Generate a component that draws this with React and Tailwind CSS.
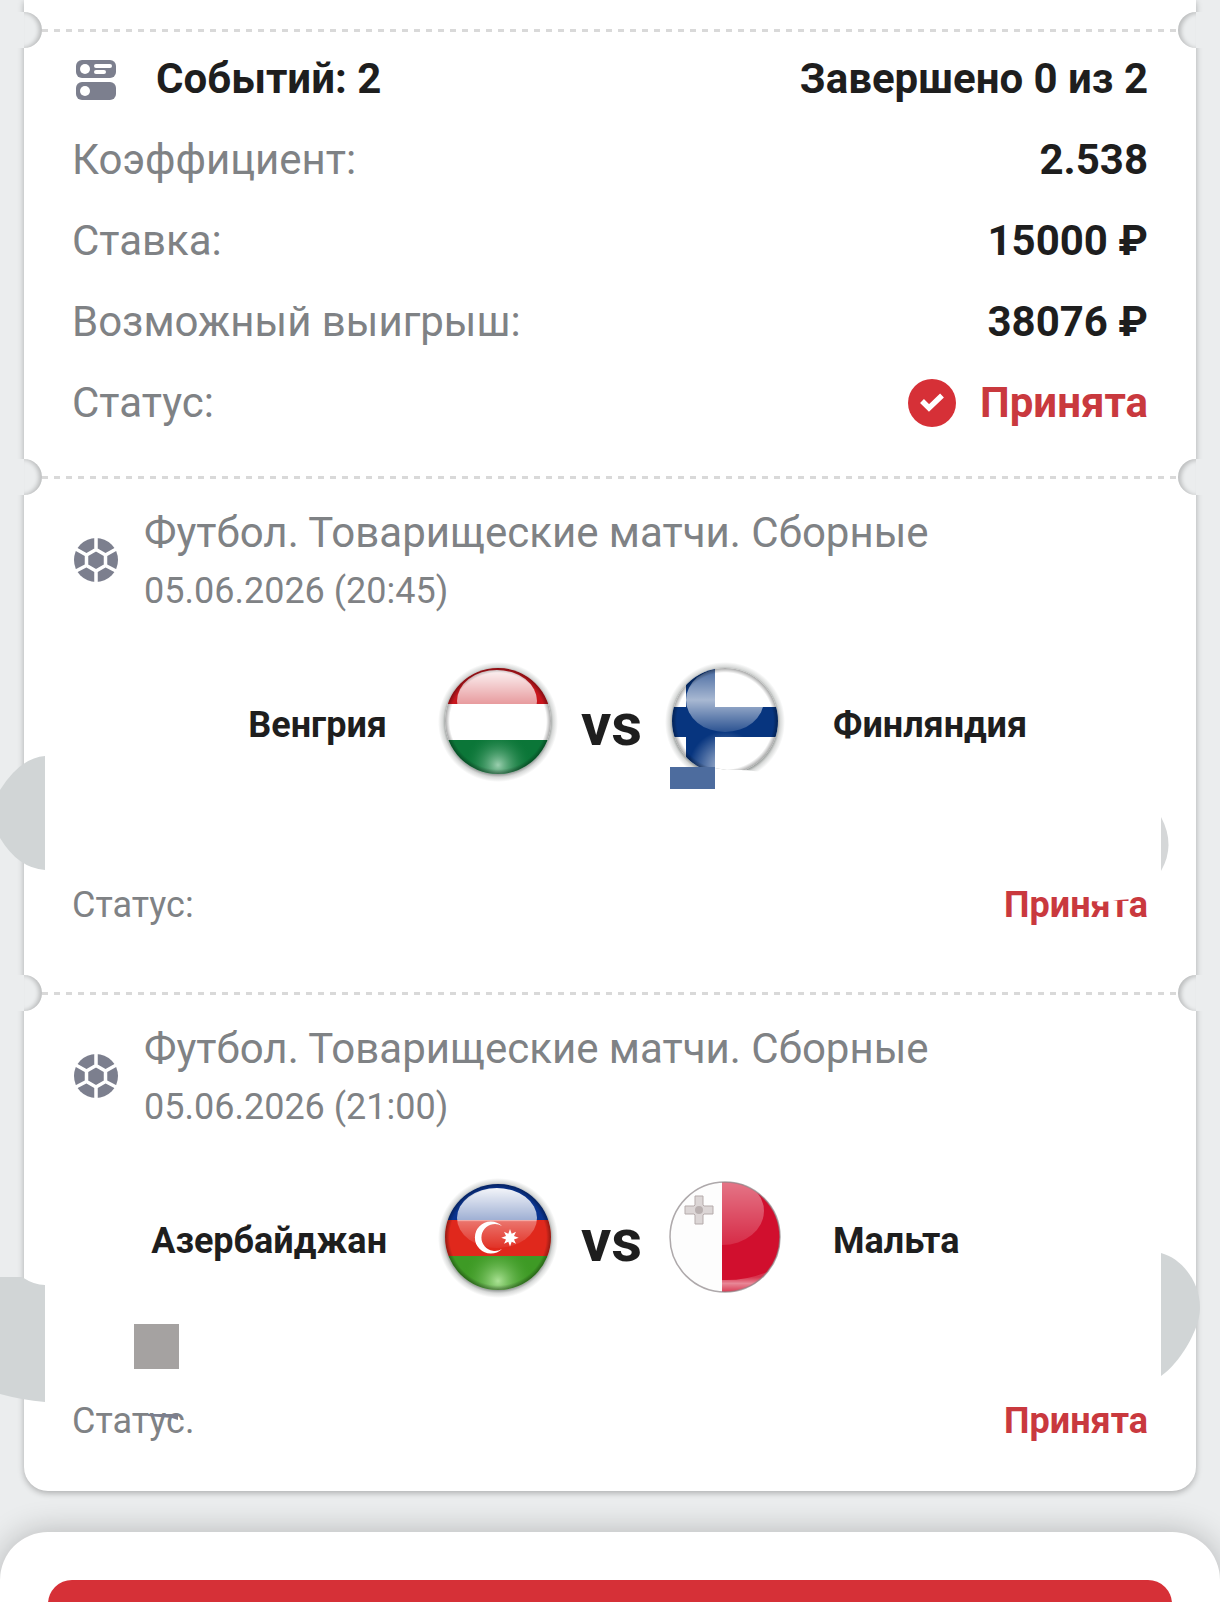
import React from 'react';

const HungaryFlag = () => (
  <svg viewBox="0 0 112 120" className="w-28 h-[120px] overflow-visible" role="img" aria-label="Венгрия">
    <defs>
      <clipPath id="hu-clip"><circle cx="56" cy="56" r="53" /></clipPath>
      <linearGradient id="hu-gloss" x1="0" y1="0" x2="0" y2="1">
        <stop offset="0" stopColor="#fff" stopOpacity="0.95" />
        <stop offset="0.58" stopColor="#fff" stopOpacity="0.55" />
        <stop offset="1" stopColor="#fff" stopOpacity="0" />
      </linearGradient>
      <radialGradient id="hu-glow" gradientUnits="userSpaceOnUse" cx="56" cy="100" r="34">
        <stop offset="0" stopColor="#b4dfc4" stopOpacity="0.85" />
        <stop offset="1" stopColor="#0f7a3a" stopOpacity="0" />
      </radialGradient>
      <radialGradient id="halo">
        <stop offset="0.86" stopColor="#4c5450" stopOpacity="0.65" />
        <stop offset="0.92" stopColor="#4c5450" stopOpacity="0.22" />
        <stop offset="1" stopColor="#4c5450" stopOpacity="0" />
      </radialGradient>
      <radialGradient id="rim">
        <stop offset="0.91" stopColor="#000" stopOpacity="0" />
        <stop offset="1" stopColor="#000" stopOpacity="0.35" />
      </radialGradient>
    </defs>
    <circle cx="56" cy="57" r="60" fill="url(#halo)" />
    <g clipPath="url(#hu-clip)">
      <rect width="112" height="39" fill="#c8161d" />
      <rect y="39" width="112" height="36" fill="#fff" />
      <rect y="75" width="112" height="40" fill="#0b7638" />
      <rect y="75" width="112" height="40" fill="url(#hu-glow)" />
      <ellipse cx="55" cy="36" rx="40" ry="31" fill="url(#hu-gloss)" />
      <circle cx="56" cy="56" r="53" fill="url(#rim)" />
    </g>
  </svg>
);

const FinlandFlag = () => (
  <svg viewBox="0 0 112 120" className="w-28 h-[120px] overflow-visible" role="img" aria-label="Финляндия">
    <defs>
      <clipPath id="fi-clip"><circle cx="56" cy="56" r="53" /></clipPath>
      <clipPath id="fi-cut"><path d="M-8-8H120V107L92 107Q74 104 58 105L46 103H-8Z" /></clipPath>
      <linearGradient id="fi-gloss" x1="0" y1="0" x2="0" y2="1">
        <stop offset="0" stopColor="#fff" stopOpacity="0.25" />
        <stop offset="0.5" stopColor="#fff" stopOpacity="0.65" />
        <stop offset="1" stopColor="#fff" stopOpacity="0.15" />
      </linearGradient>
      <radialGradient id="fi-glow" gradientUnits="userSpaceOnUse" cx="56" cy="102" r="36">
        <stop offset="0" stopColor="#fff" stopOpacity="0.7" />
        <stop offset="1" stopColor="#fff" stopOpacity="0" />
      </radialGradient>
    </defs>
    <g clipPath="url(#fi-cut)">
      <circle cx="56" cy="57" r="60" fill="url(#halo)" />
      <g clipPath="url(#fi-clip)">
        <rect width="112" height="112" fill="#fff" />
        <rect x="17" width="29" height="112" fill="#07357f" />
        <rect y="42" width="112" height="30" fill="#07357f" />
        <ellipse cx="56" cy="35" rx="39" ry="32" fill="url(#fi-gloss)" />
        <rect width="112" height="112" fill="url(#fi-glow)" />
        <circle cx="56" cy="56" r="53" fill="url(#rim)" />
      </g>
    </g>
    <rect x="1" y="102" width="45" height="22" fill="#4d6c9e" />
  </svg>
);

const AzerbaijanFlag = () => (
  <svg viewBox="0 0 112 120" className="w-28 h-[120px] overflow-visible" role="img" aria-label="Азербайджан">
    <defs>
      <clipPath id="az-clip"><circle cx="56" cy="56" r="53" /></clipPath>
      <linearGradient id="az-gloss" x1="0" y1="0" x2="0" y2="1">
        <stop offset="0" stopColor="#fff" stopOpacity="0.95" />
        <stop offset="0.55" stopColor="#fff" stopOpacity="0.6" />
        <stop offset="0.56" stopColor="#fff" stopOpacity="0.35" />
        <stop offset="1" stopColor="#fff" stopOpacity="0.05" />
      </linearGradient>
      <radialGradient id="az-glow" gradientUnits="userSpaceOnUse" cx="56" cy="100" r="36">
        <stop offset="0" stopColor="#b8eba2" stopOpacity="0.9" />
        <stop offset="1" stopColor="#3e9a25" stopOpacity="0" />
      </radialGradient>
    </defs>
    <circle cx="56" cy="57" r="60" fill="url(#halo)" />
    <g clipPath="url(#az-clip)">
      <rect width="112" height="39" fill="#0a3490" />
      <rect y="39" width="112" height="36" fill="#e0281c" />
      <rect y="75" width="112" height="40" fill="#3e9a25" />
      <rect y="75" width="112" height="40" fill="url(#az-glow)" />
      <ellipse cx="55" cy="37" rx="40" ry="30" fill="url(#az-gloss)" />
      <path d="M60 45A16 16 0 1 0 60 68A13.500 13.500 0 1 1 60 45Z" fill="#fff" />
      <path d="M68 48l1.700 4.700 4.300-2-2 4.300 4.700 1.700-4.700 1.700 2 4.300-4.300-2-1.700 4.700-1.700-4.700-4.300 2 2-4.300-4.700-1.700 4.700-1.700-2-4.300 4.300 2z" fill="#fff" />
      <circle cx="56" cy="56" r="53" fill="url(#rim)" />
    </g>
  </svg>
);

const MaltaFlag = () => (
  <svg viewBox="0 0 112 120" className="w-28 h-[120px] overflow-visible" role="img" aria-label="Мальта">
    <defs>
      <clipPath id="mt-clip"><circle cx="56" cy="56" r="55" /></clipPath>
      <clipPath id="mt-right"><rect x="53" width="60" height="120" /></clipPath>
      <linearGradient id="mt-gloss" x1="0" y1="0" x2="0" y2="1">
        <stop offset="0" stopColor="#fff" stopOpacity="0.45" />
        <stop offset="1" stopColor="#fff" stopOpacity="0.12" />
      </linearGradient>
      <linearGradient id="mt-base" gradientUnits="userSpaceOnUse" x1="0" y1="96" x2="0" y2="112">
        <stop offset="0" stopColor="#fff" stopOpacity="0.15" />
        <stop offset="0.4" stopColor="#fff" stopOpacity="0.5" />
        <stop offset="1" stopColor="#fff" stopOpacity="0.15" />
      </linearGradient>
    </defs>
    <g clipPath="url(#mt-clip)">
      <rect width="112" height="114" fill="#fdfdfd" />
      <rect x="53" width="60" height="114" fill="#d10f2e" />
      <g clipPath="url(#mt-right)">
        <ellipse cx="53" cy="30" rx="42" ry="34" fill="url(#mt-gloss)" />
        <path d="M53 99Q76 100 98 91L90 112H53Z" fill="url(#mt-base)" />
      </g>
      <path d="M26 15h8v9l1 1h9v8h-9l-1 1v9h-8v-9l-1-1h-9v-8h9l1-1z" fill="#dcd6d6" stroke="#b5abab" strokeWidth="1" />
      <circle cx="30" cy="29" r="4" fill="#b9b0b0" />
    </g>
    <circle cx="56" cy="56" r="55" fill="none" stroke="#8c8488" strokeOpacity="0.7" strokeWidth="1.500" />
  </svg>
);

const EventsIcon = () => (
  <svg viewBox="0 0 48 48" className="size-12" aria-hidden="true">
    <rect x="4" y="5" width="40" height="18" rx="6" fill="#7c7f8e" />
    <rect x="4" y="27" width="40" height="18" rx="6" fill="#7c7f8e" />
    <circle cx="13" cy="14" r="5" fill="#fff" />
    <circle cx="13" cy="36" r="5" fill="#fff" />
    <path d="M24 11h14M24 17h8" stroke="#fff" strokeWidth="4" strokeLinecap="round" />
  </svg>
);

const BallIcon = () => (
  <svg viewBox="0 0 48 48" className="size-12 shrink-0" aria-hidden="true">
    <circle cx="24" cy="24" r="22" fill="#7c7f8e" />
    <path
      d="M24 13.500L33.500 19V29.500L24 35L14.500 29.500V19ZM24 0V13.500M24 35V48M33.500 19L46 12M33.500 29.500L46 36M14.500 19L2 12M14.500 29.500L2 36"
      fill="none"
      stroke="#fff"
      strokeWidth="3.500"
    />
  </svg>
);

const CheckIcon = () => (
  <svg viewBox="0 0 48 48" className="size-12" aria-hidden="true">
    <circle cx="24" cy="24" r="24" fill="#d63037" />
    <path d="M14 22L21 29L34 16.500" fill="none" stroke="#fff" strokeWidth="5.500" />
  </svg>
);

// Ticket tear line: each notch hides the card's edge shadow, only its inner half is shaded
const Perforation = () => (
  <div className="relative h-9 flex items-center px-[18px]">
    <div className="absolute -left-2 top-0 w-2 h-9 bg-[#ebedee]" />
    <div className="absolute left-0 top-0 w-[18px] h-9 rounded-r-full bg-[#ebedee] shadow-[inset_-3px_0_4px_rgba(0,0,0,0.2)]" />
    <div className="h-[3px] flex-1 bg-[repeating-linear-gradient(90deg,#d9d9d9_0_6px,transparent_6px_12px)]" />
    <div className="absolute right-0 top-0 w-[18px] h-9 rounded-l-full bg-[#ebedee] shadow-[inset_3px_1px_4px_rgba(0,0,0,0.2)]" />
    <div className="absolute -right-2 top-0 w-2 h-9 bg-[#ebedee]" />
  </div>
);

const SummaryRow = ({ label, children }) => (
  <div className="flex justify-between items-center h-[49px]">
    <dt className="text-[#7f8285]">{label}</dt>
    <dd className="flex items-center gap-6 font-bold">{children}</dd>
  </div>
);

const EventSection = ({ date, home, away, homeFlag, awayFlag, status, value, children }) => (
  <section className="relative px-12 pt-[13px] pb-[49px]">
    {children}
    <div className="flex items-center gap-6 text-[#7f8285]">
      <BallIcon />
      <div>
        <h2 className="text-[42px] leading-[49px]">Футбол. Товарищеские матчи. Сборные</h2>
        <p className="mt-[13px] text-4xl leading-[42px]">{date}</p>
      </div>
    </div>
    <div className="mt-[53px] grid grid-cols-[1fr_342px_1fr] gap-[52px] items-center text-4xl leading-[42px] font-bold">
      <span className="text-right">{home}</span>
      <div className="flex justify-between items-center pl-[3px]">
        {homeFlag}
        <span className="text-[60px] leading-[70px]">vs</span>
        {awayFlag}
      </div>
      <span>{away}</span>
    </div>
    <div className="mt-[99px] flex justify-between text-4xl leading-[42px]">
      <span className="relative text-[#7f8285]">{status}</span>
      <span className="relative font-bold text-[#c9393e]">{value}</span>
    </div>
  </section>
);

export default function App() {
  return (
    <div className="h-screen overflow-hidden bg-[#ebedee] font-['Roboto',sans-serif] text-[#1e1e1e]">
      <main className="mx-6 pt-3 bg-white rounded-b-3xl shadow-[0_2px_6px_rgba(0,0,0,0.28)]">
        <Perforation />
        <dl className="px-12 pt-1.5 pb-8 flex flex-col gap-8 text-[42px] leading-[49px]">
          <div className="flex justify-between items-center h-[49px] font-bold">
            <dt className="flex items-center gap-9">
              <EventsIcon />
              Событий: 2
            </dt>
            <dd>Завершено 0 из 2</dd>
          </div>
          <SummaryRow label="Коэффициент:">2.538</SummaryRow>
          <SummaryRow label="Ставка:">15000 ₽</SummaryRow>
          <SummaryRow label="Возможный выигрыш:">38076 ₽</SummaryRow>
          <SummaryRow label="Статус:">
            <CheckIcon />
            <span className="text-[#c9393e]">Принята</span>
          </SummaryRow>
        </dl>

        <Perforation />
        <EventSection
          date="05.06.2026 (20:45)"
          home="Венгрия"
          away="Финляндия"
          homeFlag={<HungaryFlag />}
          awayFlag={<FinlandFlag />}
          status="Статус:"
          value={
            <>
              Принята
              <svg viewBox="0 0 141 42" className="absolute right-0 top-0 w-[141px] h-[42px]" aria-hidden="true">
                <path d="M84 10H125V15L112 16Q100 19 84 17Z" fill="#fff" />
              </svg>
            </>
          }
        >
          <svg viewBox="0 0 45 114" className="absolute -left-6 top-[261px] w-[45px] h-[114px]" aria-hidden="true">
            <path d="M45 0Q20 2 0 34V82Q18 112 45 114Z" fill="#d1d5d6" />
          </svg>
          <svg viewBox="0 0 59 54" className="absolute -right-6 top-[322px] w-[59px] h-[54px]" aria-hidden="true">
            <path d="M0 0Q15 28 0 54Z" fill="#d5d7d8" />
          </svg>
        </EventSection>

        <Perforation />
        <EventSection
          date="05.06.2026 (21:00)"
          home="Азербайджан"
          away="Мальта"
          homeFlag={<AzerbaijanFlag />}
          awayFlag={<MaltaFlag />}
          status={
            <>
              Статус.
              <svg viewBox="0 0 107 42" className="absolute left-0 top-0 w-[107px] h-[42px]" aria-hidden="true">
                <path d="M76 14H106V20L100 18L76 16Z" fill="#7c7f8e" />
              </svg>
            </>
          }
          value="Принята"
        >
          <svg viewBox="0 0 45 125" className="absolute -left-6 top-[266px] w-[45px] h-[125px]" aria-hidden="true">
            <path d="M0 0H22Q34 8 45 8V125Q22 123 0 117Z" fill="#d1d5d6" />
          </svg>
          <svg viewBox="0 0 59 123" className="absolute -right-6 top-[242px] w-[59px] h-[123px]" aria-hidden="true">
            <path d="M0 0C20 5 39 28 39 55C39 76 19 110 0 123Z" fill="#d1d5d6" />
          </svg>
          <div className="absolute left-[110px] top-[313px] size-[45px] bg-[#a5a2a1]" />
        </EventSection>
      </main>

      <footer className="mt-[41px] px-12 pt-12 pb-12 bg-white rounded-t-[48px] shadow-[0_0_32px_rgba(0,0,0,0.24)]">
        <button type="button" aria-label="Закрыть" className="block w-full h-32 rounded-3xl bg-[#d63037]" />
      </footer>
    </div>
  );
}
